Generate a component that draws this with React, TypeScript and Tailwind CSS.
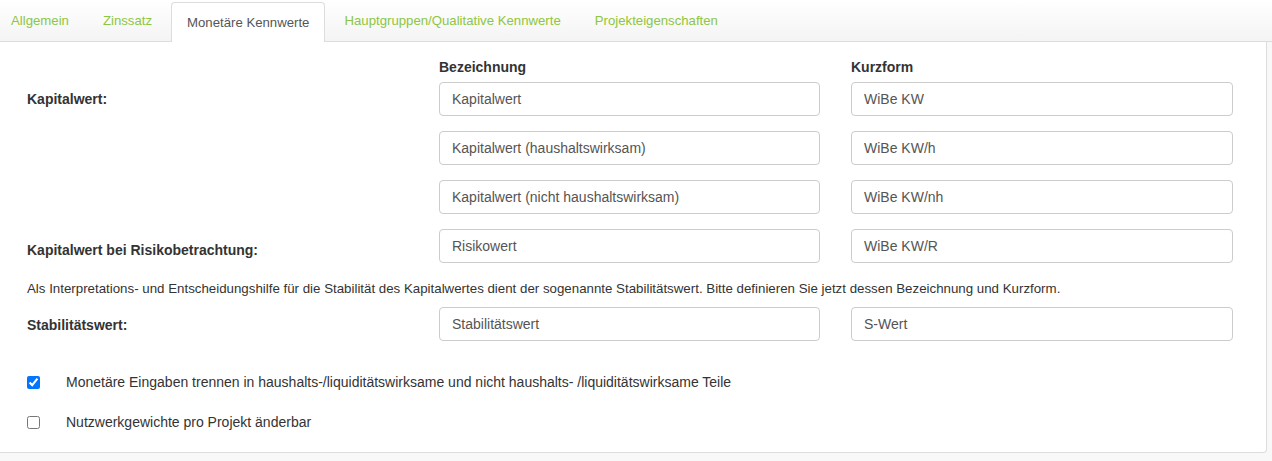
const TABS = [
  { label: 'Allgemein', active: false },
  { label: 'Zinssatz', active: false },
  { label: 'Monetäre Kennwerte', active: true },
  { label: 'Hauptgruppen/Qualitative Kennwerte', active: false },
  { label: 'Projekteigenschaften', active: false },
];

const ROWS = [
  { label: 'Kapitalwert:', name: 'Kapitalwert', short: 'WiBe KW' },
  { label: '', name: 'Kapitalwert (haushaltswirksam)', short: 'WiBe KW/h' },
  { label: '', name: 'Kapitalwert (nicht haushaltswirksam)', short: 'WiBe KW/nh' },
  { label: 'Kapitalwert bei Risikobetrachtung:', name: 'Risikowert', short: 'WiBe KW/R' },
];

const Field = ({ value }: { value: string }) => (
  <input
    type="text"
    defaultValue={value}
    className="h-[34px] w-full rounded-[4px] border border-[#cccccc] bg-white px-[12px] text-[14px] text-[#555555] outline-none"
  />
);

export default function App() {
  return (
    <div
      className="h-[461px] w-[1272px] bg-[#f8f8f8] text-[#333333]"
      style={{ fontFamily: '"Liberation Sans", Arial, sans-serif' }}
    >
      {/* Tabs */}
      <div className="flex h-[42px] items-end gap-[4px] border-b border-[#dddddd] bg-gradient-to-b from-white to-[#f4f4f4]">
        {TABS.map((t, i) => (
          <div
            key={t.label}
            className={
              t.active
                ? '-mb-px flex h-[40px] items-center rounded-t-[4px] border border-b-0 border-[#dddddd] bg-white px-[15px] text-[13.2px] text-[#555555]'
                : 'flex h-[40px] items-center px-[15px] text-[13.2px] text-[#8dc63f]' + (i === 0 ? ' -ml-[4px]' : '')
            }
          >
            {t.label}
          </div>
        ))}
      </div>

      {/* Panel */}
      <div className="h-[411px] w-[1267px] rounded-br-[4px] border-r border-b border-[#dddddd] bg-white pl-[27px] pt-[17px]">
        <div className="grid grid-cols-[381px_381px_382px] gap-x-[31px]">
          <div />
          <div className="h-[16px] text-[14px] font-bold leading-[16px]">Bezeichnung</div>
          <div className="h-[16px] text-[14px] font-bold leading-[16px]">Kurzform</div>
        </div>

        <div className="mt-[7px] flex flex-col gap-[15px]">
          {ROWS.map((r) => (
            <div key={r.name} className="grid grid-cols-[381px_381px_382px] items-center gap-x-[31px]">
              <div className={'text-[14px] font-bold' + (r.label.startsWith('Kapitalwert bei') ? ' pt-[8px]' : '')}>{r.label}</div>
              <Field value={r.name} />
              <Field value={r.short} />
            </div>
          ))}
        </div>

        <p className="mt-[17px] text-[13.3px] leading-[18px]">
          Als Interpretations- und Entscheidungshilfe für die Stabilität des Kapitalwertes dient der sogenannte
          Stabilitätswert. Bitte definieren Sie jetzt dessen Bezeichnung und Kurzform.
        </p>

        <div className="mt-[9px] grid grid-cols-[381px_381px_382px] items-center gap-x-[31px]">
          <div className="pt-[2px] text-[14px] font-bold">Stabilitätswert:</div>
          <Field value="Stabilitätswert" />
          <Field value="S-Wert" />
        </div>

        <div className="mt-[32px] flex flex-col gap-[22px]">
          <label className="flex h-[18px] items-center">
            <input type="checkbox" defaultChecked className="m-0 h-[13px] w-[13px] accent-[#0075ff]" />
            <span className="ml-[26px] text-[14px]">
              Monetäre Eingaben trennen in haushalts-/liquiditätswirksame und nicht haushalts- /liquiditätswirksame Teile
            </span>
          </label>
          <label className="flex h-[18px] items-center">
            <input type="checkbox" className="m-0 h-[13px] w-[13px]" />
            <span className="ml-[26px] text-[14px]">Nutzwerkgewichte pro Projekt änderbar</span>
          </label>
        </div>
      </div>
    </div>
  );
}
